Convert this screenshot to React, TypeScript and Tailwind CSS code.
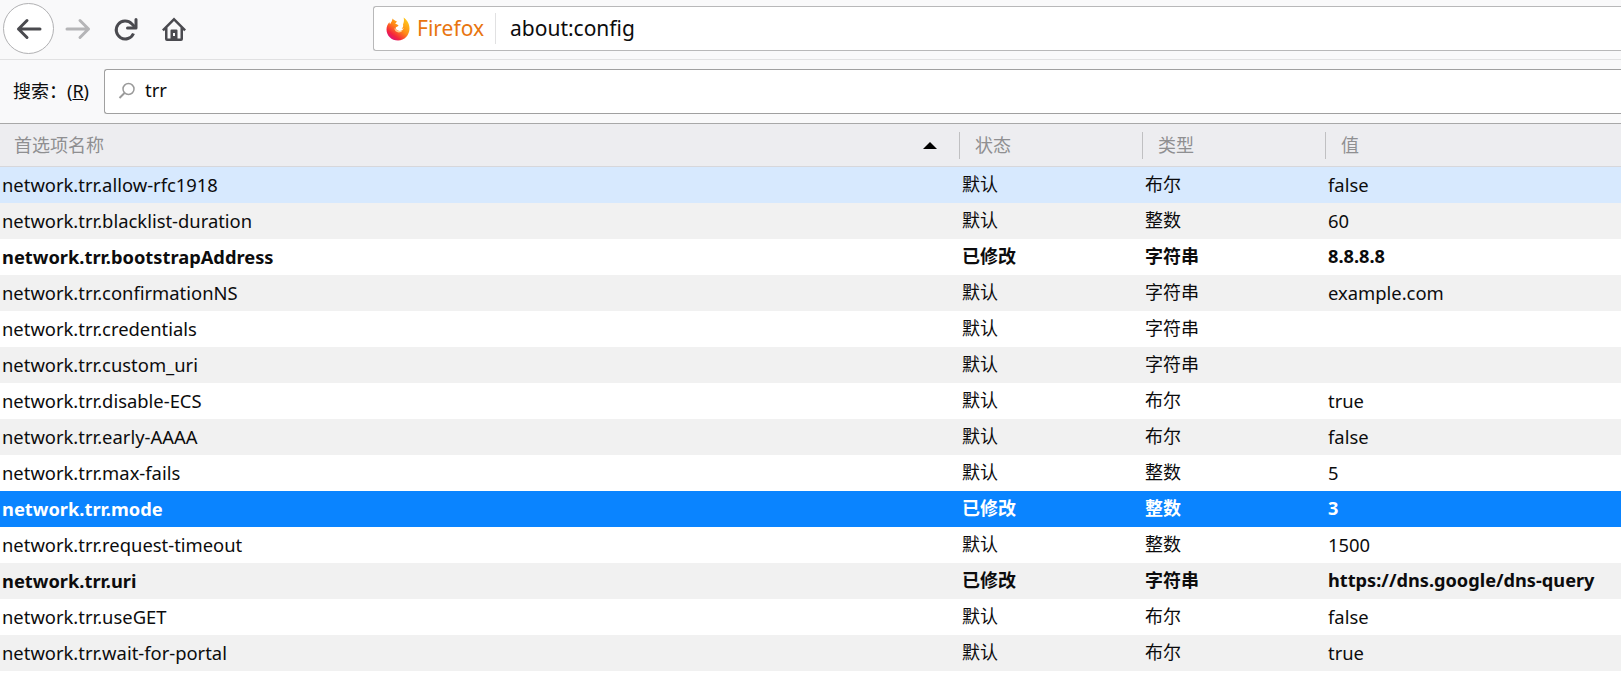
import React from "react";

const FONT = "font-['Noto_Sans','Noto_Sans_CJK_SC',sans-serif]";

type Pref = { name: string; status: string; type: string; value: string; bold?: boolean };

const prefs: Pref[] = [
  { name: "network.trr.allow-rfc1918", status: "默认", type: "布尔", value: "false" },
  { name: "network.trr.blacklist-duration", status: "默认", type: "整数", value: "60" },
  { name: "network.trr.bootstrapAddress", status: "已修改", type: "字符串", value: "8.8.8.8", bold: true },
  { name: "network.trr.confirmationNS", status: "默认", type: "字符串", value: "example.com" },
  { name: "network.trr.credentials", status: "默认", type: "字符串", value: "" },
  { name: "network.trr.custom_uri", status: "默认", type: "字符串", value: "" },
  { name: "network.trr.disable-ECS", status: "默认", type: "布尔", value: "true" },
  { name: "network.trr.early-AAAA", status: "默认", type: "布尔", value: "false" },
  { name: "network.trr.max-fails", status: "默认", type: "整数", value: "5" },
  { name: "network.trr.mode", status: "已修改", type: "整数", value: "3", bold: true },
  { name: "network.trr.request-timeout", status: "默认", type: "整数", value: "1500" },
  { name: "network.trr.uri", status: "已修改", type: "字符串", value: "https://dns.google/dns-query", bold: true },
  { name: "network.trr.useGET", status: "默认", type: "布尔", value: "false" },
  { name: "network.trr.wait-for-portal", status: "默认", type: "布尔", value: "true" },
];

function rowClass(i: number) {
  if (i === 0) return "bg-[#d7e9fe] text-[#0c0c0d]";
  if (i === 9) return "bg-[#0a84ff] text-white";
  return i % 2 === 1 ? "bg-[#f1f1f1] text-[#0c0c0d]" : "bg-white text-[#0c0c0d]";
}

function FirefoxLogo() {
  return (
    <svg width="24" height="24" viewBox="0 0 24 24">
      <defs>
        <linearGradient id="fx" x1="0.85" y1="0.1" x2="0.2" y2="0.95">
          <stop offset="0" stopColor="#ffc61e" />
          <stop offset="0.45" stopColor="#ff8a16" />
          <stop offset="0.8" stopColor="#f5253c" />
          <stop offset="1" stopColor="#d6127e" />
        </linearGradient>
      </defs>
      <path
        d="M17.5 0.500c3 2 6 5.500 6 11C23.500 18 18.500 23.500 12 23.500 5.500 23.500 0.500 18.500 0.500 12.400 0.500 9.600 1.600 7 3.400 5.200l.6 2C5 5.400 6.500 3.500 6.500 1.500c1 1.300 3 2.500 4.500 3-.8.8-1.500 1.500-1.800 2.300 1.400.4 2.800 1 3.400 1.800-.6 1.200-2.800 1.600-3 2.400 0 1 1 2.400 3 2.800 2.400.4 4.400-.8 5.200-2.600-.6.4-1.400.6-2.200.4 1.600-1 1.800-2.600 1.400-4.200 1-2 1.300-4.500.6-7.200z"
        fill="url(#fx)"
      />
      <path d="M8.400 11c0 2.600 2 4.400 4.400 4.400 1.600 0 3-.8 3.800-2-1.400.8-4.600 1-6-.4-.8-.6-1.600-1.200-2.200-2z" fill="#ffe9a8" opacity="0.8" />
    </svg>
  );
}

export default function App() {
  return (
    <div className={`${FONT} w-[1621px] h-[688px] overflow-hidden bg-white flex flex-col`}>
      {/* 工具栏 */}
      <div className="h-[60px] shrink-0 bg-[#f9f9fa] border-b border-[#e1e1e2] flex items-start">
        <div className="ml-[3px] mt-[3px] w-[51px] h-[51px] rounded-full border border-[#b1b1b3] bg-white flex items-center justify-center">
          <svg width="26" height="22" viewBox="0 0 26 22" fill="none" stroke="#4a4a4f" strokeWidth="3" strokeLinecap="round" strokeLinejoin="round">
            <path d="M24 11H2.500M11 2.500 2.500 11l8.500 8.500" />
          </svg>
        </div>
        <div className="ml-[11px] mt-[18px]">
          <svg width="26" height="22" viewBox="0 0 26 22" fill="none" stroke="#b5b5b7" strokeWidth="3" strokeLinecap="round" strokeLinejoin="round">
            <path d="M2 11h21.500M15 2.500l8.500 8.500-8.500 8.500" />
          </svg>
        </div>
        <div className="ml-[23px] mt-[18px]">
          <svg width="24" height="24" viewBox="0 0 24 24" fill="none" stroke="#4a4a4f" strokeWidth="3" strokeLinejoin="round">
            <path d="M19.500 15.500a9 9 0 1 1-1.800-9.800l3 3" />
            <path d="M22 1.500v8.500h-8.500" strokeLinecap="round" />
          </svg>
        </div>
        <div className="ml-[24px] mt-[17px]">
          <svg width="24" height="24" viewBox="0 0 24 24" fill="#4a4a4f" fillRule="evenodd">
            <path d="M12 0.500 24 12.400l-1.800 1.800-1.200-1.200V22a2 2 0 0 1-2 2H5a2 2 0 0 1-2-2V13l-1.200 1.200L0 12.400zM12 4 5.500 10.500V21.500H8.500V13.500a1 1 0 0 1 1-1h5a1 1 0 0 1 1 1v8h3V10.500zM11 16v3h2v-3z" />
          </svg>
        </div>
        {/* 地址栏 */}
        <div className="ml-[187px] mt-[6px] flex-1 h-[45px] bg-white border border-r-0 border-[#b8b8b9] rounded-l-[3px] flex items-center">
          <div className="ml-[12px]"><FirefoxLogo /></div>
          <span className="ml-[7px] text-[21px] text-[#e8750f] w-[78px]">Firefox</span>
          <div className="h-[31px] w-px bg-[#e1e1e2]" />
          <span className="ml-[14px] text-[21px] text-[#0c0c0d]">about:config</span>
        </div>
      </div>
      {/* 搜索栏 */}
      <div className="h-[64px] shrink-0 bg-[#f9f9fa] flex items-center border-b border-[#a8a8a8]">
        <span className="ml-[13px] w-[91px] text-[18px] text-[#0c0c0d] whitespace-nowrap">
          {"搜索\uFF1A"}(<span className="underline">R</span>)
        </span>
        <div className="flex-1 h-[45px] bg-white border border-r-0 border-[#a0a0a0] rounded-l-[3px] flex items-center">
          <svg className="ml-[13px] mb-[2px]" width="18" height="18" viewBox="0 0 18 18" fill="none" stroke="#9a9a9a" strokeWidth="1.500">
            <circle cx="10.500" cy="7" r="5.500" />
            <path d="M6.500 11 1.500 16" strokeWidth="2" />
          </svg>
          <span className="ml-[9px] mb-[3px] text-[18.5px] text-[#0c0c0d]">trr</span>
        </div>
      </div>
      {/* 表头 */}
      <div className="h-[43px] shrink-0 bg-[#ededf0] border-b border-[#d7d7db] flex items-center text-[18px] text-[#8f8f91]">
        <div className="w-[959px] pl-[14px] pr-[22px] flex items-center justify-between">
          <span>首选项名称</span>
          <span className="w-0 h-0 border-x-[7px] border-x-transparent border-b-[7px] border-b-black" />
        </div>
        <div className="w-[183px] h-[27px] border-l border-[#c0c0c2] pl-[15px] flex items-center">状态</div>
        <div className="w-[183px] h-[27px] border-l border-[#c0c0c2] pl-[15px] flex items-center">类型</div>
        <div className="flex-1 h-[27px] border-l border-[#c0c0c2] pl-[15px] flex items-center">值</div>
      </div>
      {/* 列表 */}
      <div className="text-[18px]">
        {prefs.map((p, i) => (
          <div key={p.name} className={`h-[36px] pb-[1px] flex items-center ${rowClass(i)} ${p.bold ? "font-bold" : ""}`}>
            <div className={`w-[962px] pl-[2px] ${p.bold ? "text-[18.3px]" : "text-[18.4px]"}`}>{p.name}</div>
            <div className="w-[183px]">{p.status}</div>
            <div className="w-[183px]">{p.type}</div>
            <div className={`flex-1 ${p.bold ? "text-[18.2px]" : "text-[18.4px]"}`}>{p.value}</div>
          </div>
        ))}
      </div>
    </div>
  );
}
